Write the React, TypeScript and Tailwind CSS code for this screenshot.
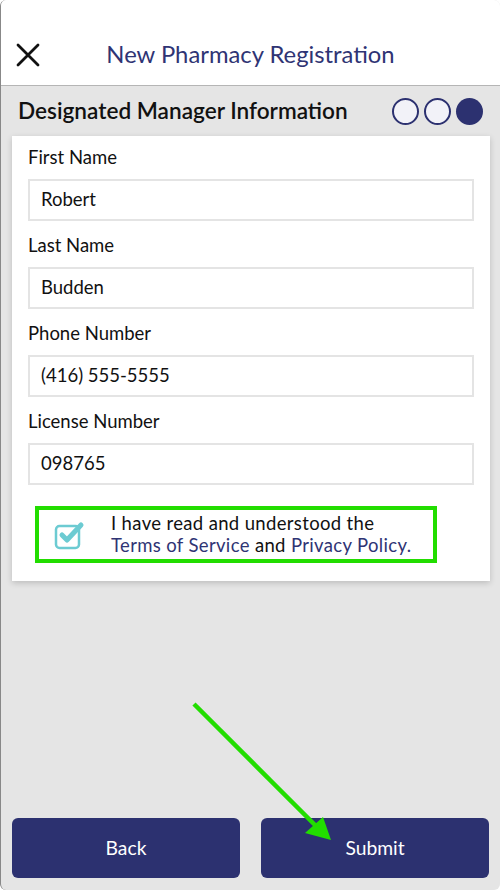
import React from "react";

function Field({ label, value, first }: { label: string; value: string; first?: boolean }) {
  return (
    <div className="flex flex-col">
      <div className={(first ? "mt-[10px]" : "mt-[13px]") + " text-[18.5px] leading-[22px] h-[22px] text-[#111]"}>{label}</div>
      <div className="mt-[11px] h-[42px] border-2 border-[#e4e4e4] flex items-center pl-[11px] text-[18.5px] text-[#111]">
        {value}
      </div>
    </div>
  );
}

export default function App() {
  return (
    <div
      className="w-[500px] h-[890px] bg-[#e5e5e5] flex flex-col relative overflow-hidden rounded-[6px] border-l border-[#888]"
      style={{ fontFamily: "Lato, 'Open Sans', sans-serif" }}
    >
      <div className="h-[86px] bg-white border-b border-[#b5b5b5] flex items-end pb-[17px] relative">
        <svg className="absolute left-[15px] top-[43px]" width="24" height="24" viewBox="0 0 24 24">
          <path d="M2 2 L22 22 M22 2 L2 22" stroke="#111" strokeWidth="2.8" strokeLinecap="round" />
        </svg>
        <div className="w-full text-center text-[23.8px] leading-[28px] text-[#2f3474]">New Pharmacy Registration</div>
      </div>
      <div className="flex items-center justify-between h-[50px] pl-[17px] pr-[17px]">
        <div className="text-[22.6px] font-semibold text-[#111]">Designated Manager Information</div>
        <div className="flex gap-[5px]">
          <div className="w-[27px] h-[27px] rounded-full border-2 border-[#2c3170] bg-[#f2f2f8]" />
          <div className="w-[27px] h-[27px] rounded-full border-2 border-[#2c3170] bg-[#f2f2f8]" />
          <div className="w-[27px] h-[27px] rounded-full bg-[#2c3170]" />
        </div>
      </div>
      <div className="ml-[11px] mr-[10px] bg-white shadow-[0_2px_6px_rgba(0,0,0,0.18)] px-[16px] pb-[18px]">
        <Field label="First Name" value="Robert" first />
        <Field label="Last Name" value="Budden" />
        <Field label="Phone Number" value="(416) 555-5555" />
        <Field label="License Number" value="098765" />
        <div className="mt-[21px] ml-[7px] w-[402px] h-[57px] border-4 border-[#22dd00] flex items-center">
          <svg className="ml-[15px]" width="32" height="30" viewBox="0 0 32 30">
            <rect x="2" y="6" width="23" height="22" rx="3.5" fill="none" stroke="#6ccbd2" strokeWidth="2.5" />
            <path d="M8 15 L13 20 L27 5" fill="none" stroke="#6ccbd2" strokeWidth="5" strokeLinecap="round" strokeLinejoin="round" />
          </svg>
          <div className="ml-[25px] text-[18.5px] leading-[22.2px] tracking-[0.35px] text-[#111] -mt-[1px]">
            <div>I have read and understood the</div>
            <div>
              <span className="text-[#2f3474]">Terms of Service</span> and{" "}
              <span className="text-[#2f3474]">Privacy Policy.</span>
            </div>
          </div>
        </div>
      </div>
      <div className="flex-1" />
      <div className="flex gap-[21px] px-[11px] pb-[12px]">
        <button className="flex-1 h-[60px] rounded-[6px] bg-[#2c3170] text-white text-[19.3px]">Back</button>
        <button className="flex-1 h-[60px] rounded-[6px] bg-[#2c3170] text-white text-[19.3px]">Submit</button>
      </div>
      <svg className="absolute left-0 top-0 pointer-events-none" width="500" height="890">
        <line x1="193" y1="704" x2="315" y2="826" stroke="#22dd00" strokeWidth="4.5" />
        <polygon points="304,833 322,817 330,840" fill="#22dd00" />
      </svg>
    </div>
  );
}
